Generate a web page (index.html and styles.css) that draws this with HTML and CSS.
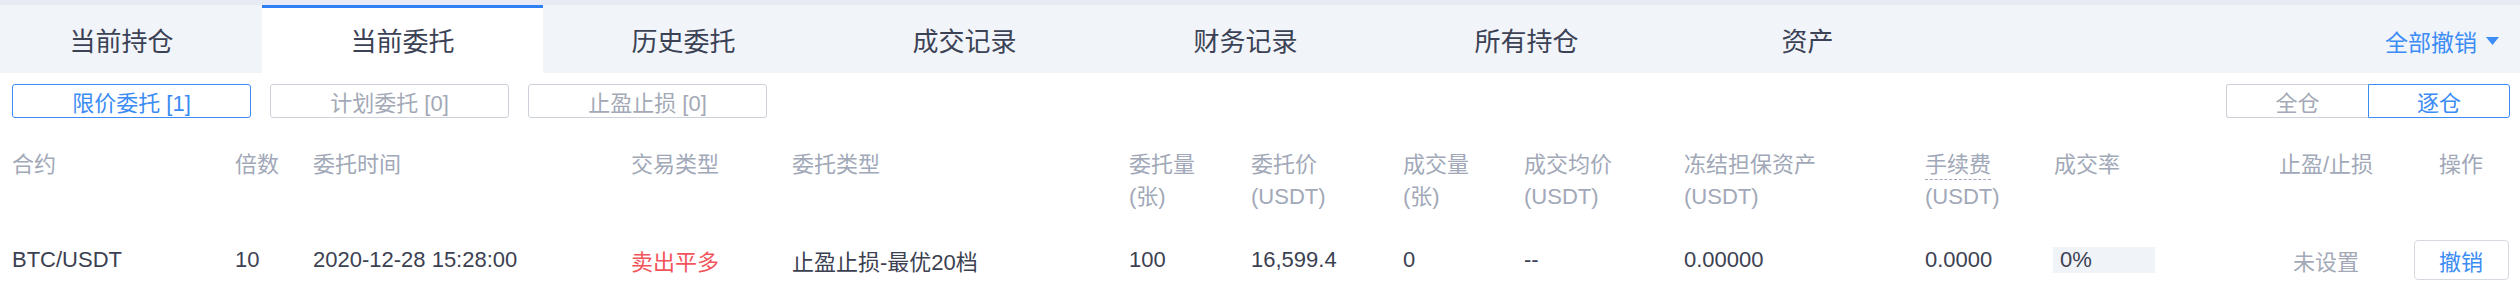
FILE: index.html
```html
<!DOCTYPE html>
<html lang="zh-CN">
<head>
    <meta charset="UTF-8">
    <title>当前委托</title>
    <link rel="stylesheet" href="styles.css">
</head>
<body>
    <div class="tabs">
        <div class="tab-list">
            <div class="tab">当前持仓</div>
            <div class="tab active">当前委托</div>
            <div class="tab">历史委托</div>
            <div class="tab">成交记录</div>
            <div class="tab">财务记录</div>
            <div class="tab">所有持仓</div>
            <div class="tab">资产</div>
        </div>
        <div class="cancel-all">全部撤销
            <svg width="13" height="8" viewBox="0 0 13 8"><path d="M0 0H13L6.5 8Z" fill="#3b8cf5"/></svg>
        </div>
    </div>

    <div class="toolbar">
        <div class="filters">
            <button class="filter active">限价委托 [1]</button>
            <button class="filter">计划委托 [0]</button>
            <button class="filter">止盈止损 [0]</button>
        </div>
        <div class="mode">
            <button class="mode-btn">全仓</button>
            <button class="mode-btn active">逐仓</button>
        </div>
    </div>

    <div class="orders">
        <div class="row head">
            <div>合约</div>
            <div>倍数</div>
            <div>委托时间</div>
            <div>交易类型</div>
            <div>委托类型</div>
            <div>委托量<br>(张)</div>
            <div>委托价<br>(USDT)</div>
            <div>成交量<br>(张)</div>
            <div>成交均价<br>(USDT)</div>
            <div>冻结担保资产<br>(USDT)</div>
            <div><span class="tip">手续费</span><br>(USDT)</div>
            <div>成交率</div>
            <div class="center">止盈/止损</div>
            <div class="center">操作</div>
        </div>
        <div class="row data">
            <div>BTC/USDT</div>
            <div>10</div>
            <div>2020-12-28 15:28:00</div>
            <div class="sell">卖出平多</div>
            <div>止盈止损-最优20档</div>
            <div>100</div>
            <div>16,599.4</div>
            <div>0</div>
            <div>--</div>
            <div>0.00000</div>
            <div>0.0000</div>
            <div><div class="rate">0%</div></div>
            <div class="center muted">未设置</div>
            <div class="center"><button class="revoke">撤销</button></div>
        </div>
    </div>
</body>
</html>
```

FILE: styles.css
```css
body
{
    margin: 0;
    font-family: "Liberation Sans", "Noto Sans CJK SC", sans-serif;
    font-size: 22px;
    color: #3c4152;
    background: #fff;
    overflow: hidden;
}
button
{
    font-family: inherit;
    font-size: 22px;
    background: #fff;
    cursor: pointer;
    padding: 0;
}

/* tabs */
.tabs
{
    display: flex;
    align-items: center;
    height: 68px;
    border-top: 5px solid #e8ebf3;
    background: #f1f4f9;
}
.tab-list
{
    display: flex;
    margin-left: -19px;
    height: 100%;
}
.tab
{
    width: 281px;
    display: flex;
    align-items: center;
    justify-content: center;
    font-size: 26px;
    color: #3b4255;
    box-sizing: border-box;
}
.tab.active
{
    background: #fff;
    border-top: 3px solid #2f80f7;
    padding-bottom: 3px;
}
.cancel-all
{
    margin-left: auto;
    margin-right: 21px;
    display: flex;
    align-items: center;
    gap: 9px;
    font-size: 23px;
    color: #3b8cf5;
    padding-top: 4px;
}

/* filter bar */
.toolbar
{
    display: flex;
    justify-content: space-between;
    padding: 11px 10px 0 12px;
}
.filters
{
    display: flex;
    gap: 19px;
}
.filter
{
    width: 239px;
    height: 34px;
    border: 1px solid #cdd1da;
    border-radius: 3px;
    color: #a3a9b6;
}
.filter.active
{
    border-color: #3b8cf5;
    color: #3b8cf5;
}
.mode
{
    display: flex;
}
.mode-btn
{
    width: 142px;
    height: 34px;
    border: 1px solid #cdd1da;
    color: #a3a9b6;
}
.mode-btn:first-child
{
    border-radius: 3px 0 0 3px;
    border-right: none;
}
.mode-btn.active
{
    border-color: #3b8cf5;
    color: #3b8cf5;
    border-radius: 0 3px 3px 0;
}

/* order table */
.orders
{
    padding: 31px 0 0 12px;
}
.row
{
    display: grid;
    grid-template-columns: 223px 78px 318px 161px 337px 122px 152px 121px 160px 241px 129px 196px 152px 1fr;
}
.head
{
    line-height: 32px;
    color: #a1a8b8;
}
.tip
{
    border-bottom: 1px dashed #a1a8b8;
    padding-bottom: 2px;
}
.data
{
    margin-top: 27px;
    align-items: center;
    min-height: 40px;
}
.center
{
    text-align: center;
}
.sell
{
    color: #f2545b;
}
.muted
{
    color: #a3a9b6;
}
.rate
{
    width: 102px;
    height: 26px;
    line-height: 26px;
    padding-left: 7px;
    box-sizing: border-box;
    background: #f0f3f8;
    margin-left: -1px;
}
.revoke
{
    width: 95px;
    height: 40px;
    border: 1px solid #d5d9e0;
    border-radius: 4px;
    color: #3b8cf5;
}
```
